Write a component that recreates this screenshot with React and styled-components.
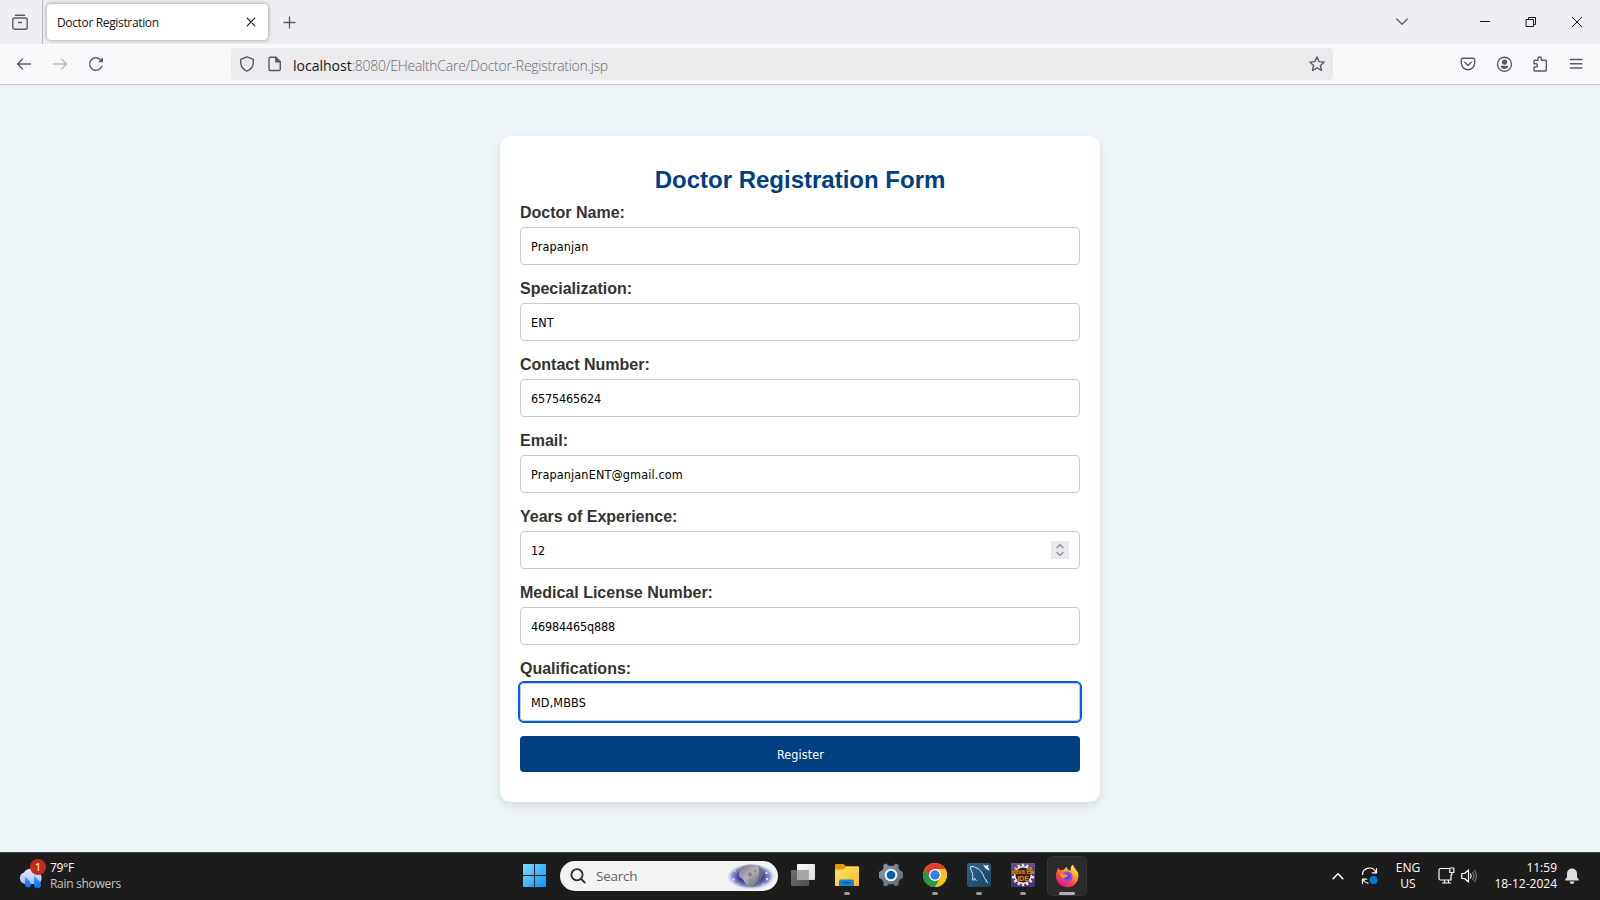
import React from 'react';
import styled, { createGlobalStyle } from 'styled-components';

const GlobalStyle = createGlobalStyle`
  *, *::before, *::after { box-sizing: border-box; }
  body { margin: 0; background: #edf5f8; }
  svg { display: block; flex: none; overflow: visible; }
`;

const ui = `'Open Sans', 'Noto Sans', sans-serif`;

const Screen = styled.div`
  width: 1600px;
  height: 900px;
  display: flex;
  flex-direction: column;
  overflow: hidden;
  font-family: ${ui};
`;

/* ---------- browser chrome ---------- */
const TabBar = styled.header`
  height: 44px;
  flex: none;
  display: flex;
  background: #eeeef3;
  color: #5b5b66;
`;
const ViewButton = styled.div`
  width: 43px;
  padding: 14px 0 0 12px;
  border-right: 1px solid #b8b8bf;
`;
const Tab = styled.div`
  width: 221px;
  height: 36px;
  margin: 4px 0 0 4px;
  padding: 0 12px 0 10px;
  display: flex;
  align-items: center;
  justify-content: space-between;
  border-radius: 4px;
  background: #fff;
  box-shadow: 0 0 4px rgba(0, 0, 0, 0.4);
  color: #15141a;
`;
const TabTitle = styled.span`
  font-size: 12px;
  line-height: 16px;
  letter-spacing: -0.35px;
  white-space: nowrap;
  padding-top: 2px;
`;
const NewTab = styled.div`
  padding: 16px 0 0 15px;
`;
const WindowControls = styled.div`
  margin-left: auto;
  padding: 16px 18px 0 0;
  display: flex;
  color: #15141a;
`;
const Control = styled.div`
  margin-left: ${(p) => p.$gap}px;
`;

const NavBar = styled.nav`
  height: 41px;
  flex: none;
  display: flex;
  align-items: center;
  padding: 0 16px;
  background: #f9f9fb;
  border-bottom: 1px solid #c8c8ce;
  color: #5b5b66;
`;
const NavGroup = styled.div`
  display: flex;
  align-items: center;
  gap: 20px;
  width: ${(p) => p.$width || 'auto'};
  margin-left: ${(p) => (p.$end ? 'auto' : 0)};
`;
const AddressBar = styled.div`
  width: 1102px;
  height: 32px;
  display: flex;
  align-items: center;
  padding: 0 8px;
  border-radius: 4px;
  background: #ebebed;
`;
const Url = styled.span`
  margin: 2px auto 0 10px;
  font-size: 14px;
  font-weight: 300;
  letter-spacing: -0.26px;
  white-space: nowrap;
  color: #6c6c72;
  b { font-weight: 400; color: #15141a; letter-spacing: 0; }
`;
const IconGap = styled.div`
  width: 12px;
`;

/* ---------- page ---------- */
const Page = styled.main`
  height: 767px;
  flex: none;
  padding-top: 51px;
  background: #edf5f8;
`;
const Card = styled.form`
  width: 600px;
  height: 666px;
  margin: 0 auto;
  padding: 30px 20px;
  border-radius: 10px;
  background: #fff;
  box-shadow: 0 4px 8px rgba(0, 0, 0, 0.1);
`;
const Title = styled.h2`
  margin: 0 0 10px;
  font: bold 24px/28px 'Liberation Sans', Arial, sans-serif;
  text-align: center;
  color: #004080;
`;
const Field = styled.div`
  margin-bottom: 15px;
`;
const Label = styled.label`
  display: block;
  margin-bottom: 5px;
  font: bold 16px/18px 'Liberation Sans', Arial, sans-serif;
  color: #333;
`;
const InputBox = styled.div`
  height: 38px;
  padding: 0 10px;
  display: flex;
  align-items: center;
  justify-content: space-between;
  border: 1px solid #ccc;
  border-radius: 4px;
  background: #fff;
  outline: ${(p) => (p.$focused ? '2px solid #0060df' : 'none')};
  outline-offset: -0.5px;
`;
const Value = styled.span`
  padding-top: 2px;
  font: 12.5px/16px 'DejaVu Sans Condensed', 'DejaVu Sans', sans-serif;
  font-stretch: condensed;
  letter-spacing: ${(p) => (p.$numeric ? '-0.16px' : '0.14px')};
  color: #000;
`;
const Spinner = styled.div`
  width: 18px;
  height: 18px;
  background: #e9e9ed;
  color: #8f8f9d;
`;
const Submit = styled.button`
  display: block;
  width: 100%;
  height: 36px;
  padding: 2px 0 0 1px;
  border: 0;
  border-radius: 4px;
  background: #004080;
  color: #fff;
  font: 12.5px/16px 'DejaVu Sans Condensed', 'DejaVu Sans', sans-serif;
  font-stretch: condensed;
  letter-spacing: 0.1px;
`;

/* ---------- taskbar ---------- */
const Taskbar = styled.footer`
  height: 48px;
  flex: none;
  display: flex;
  align-items: center;
  padding-bottom: 2px;
  border-top: 1px solid #3c3f41;
  background: #1c1c1c;
  color: #fff;
`;
const Weather = styled.div`
  width: 523px;
  padding-left: 17px;
  display: flex;
  align-items: center;
  gap: 6px;
`;
const Lines = styled.div`
  font-size: 12px;
  line-height: 16px;
  text-align: ${(p) => p.$align || 'left'};
  width: ${(p) => p.$width || 'auto'};
  white-space: nowrap;
  letter-spacing: ${(p) => p.$track || 0};
  div + div { color: ${(p) => p.$second || '#fff'}; }
`;
const SearchBox = styled.div`
  width: 218px;
  height: 30px;
  margin: 0 3px 0 14px;
  padding: 0 3px 0 10px;
  display: flex;
  align-items: center;
  border-radius: 15px;
  background: #f3f3f3;
  color: #666;
  font-size: 13.5px;
  span { margin: 0 auto 0 10px; letter-spacing: -0.25px; }
`;
const AppSlot = styled.div`
  width: 44px;
  height: 45px;
  display: flex;
  flex-direction: column;
  align-items: center;
  padding-top: 10px;
`;
const ActiveTile = styled(AppSlot)`
  width: 40px;
  height: 40px;
  margin: 0 2px;
  padding-top: 7px;
  border: 1px solid #333;
  border-radius: 5px;
  background: #2b2b2b;
`;
const Running = styled.i`
  width: ${(p) => (p.$active ? 16 : 6)}px;
  height: 3px;
  margin-top: ${(p) => (p.$active ? 4 : 5)}px;
  border-radius: 2px;
  background: ${(p) => (p.$active ? '#b5b0ab' : '#9a9a9a')};
`;
const Tray = styled.div`
  margin-left: auto;
  padding-right: 21px;
  display: flex;
  align-items: center;
`;
const TraySlot = styled.div`
  margin-left: ${(p) => p.$gap}px;
`;

const Line = ({ w = 16, h = w, box, sw = 1.4, children, ...rest }) => (
  <svg width={w} height={h} viewBox={box || `0 0 ${w} ${h}`} fill="none" stroke="currentColor"
    strokeWidth={sw} strokeLinecap="round" strokeLinejoin="round" {...rest}>{children}</svg>
);

const Firefox = () => (
  <svg width="24" height="24" viewBox="0 0 24 24">
    <defs>
      <linearGradient id="ffBody" x1=".85" y1=".05" x2=".25" y2=".95">
        <stop offset="0" stopColor="#fff44f" /><stop offset=".35" stopColor="#ffa41c" />
        <stop offset=".65" stopColor="#ff4b3e" /><stop offset="1" stopColor="#e31587" />
      </linearGradient>
      <radialGradient id="ffCore"><stop offset="0" stopColor="#592acb" /><stop offset="1" stopColor="#9059ff" /></radialGradient>
    </defs>
    <path d="M3.2 3.8c.5 1 1.200 1.900 2 2.500 1-.5 2.300-.7 3.500-.4.600-1.300 1.800-2.400 3.300-2.900-.2 1.200.3 2 1.200 2.700 1 .2 1.800.7 2.500 1.300C15.300 4.500 15.700 2 18.200.5c.1 3 3.300 4.700 4.300 8 .2-.5.200-1 .1-1.600 3 8.500-2.500 16.300-10.300 16.300C5.900 23.200.9 18.400.9 12c0-3.200 1.200-5.700 2.300-8.200z" fill="url(#ffBody)" />
    <path d="M7.200 10.300c1-1.800 3-3.200 5.200-3 3 .2 5.200 2.500 5.200 5.400 0 3-2.400 5.200-5.400 5.200-2.700 0-5-1.900-5.300-4.500 1 .7 2.300.7 3.300 0 .9-.6 1.500-.9 2.600-1-.4-1.300-2-2.100-3.400-1.700-.8.200-1.500.1-2.200-.4z" fill="url(#ffCore)" />
    <path d="M4.800 9.900c1-.6 2.300-.5 3.200.1.800.6 1.900.5 2.900.6 1 .1 2 .8 2 1.600-1.100.2-1.700.5-2.600 1.100-1.300.9-2.700.9-3.700 0-1-.8-1.700-2-1.800-3.400z" fill="#ff9b26" />
  </svg>
);

const Chrome = () => (
  <svg width="24" height="24" viewBox="0 0 24 24">
    <circle cx="12" cy="12" r="12" fill="#fbc116" />
    <path d="M1.610 6A12 12 0 0 0 12 24l5.200-9L12 12 6.800 15z" fill="#229a46" />
    <path d="M12 6h10.390A12 12 0 0 0 1.610 6l5.190 9z" fill="#e33b2e" />
    <path d="M12 6h10.390A12 12 0 0 1 12 24l5.200-9z" fill="#fbc116" />
    <circle cx="12" cy="12" r="6" fill="#fff" /><circle cx="12" cy="12" r="4.700" fill="#2f7ff3" />
  </svg>
);

const teeth = (n) => Array.from({ length: n }, (_, i) => (360 / n) * i);

const fields = [
  ['Doctor Name:', 'Prapanjan'],
  ['Specialization:', 'ENT'],
  ['Contact Number:', '6575465624'],
  ['Email:', 'PrapanjanENT@gmail.com'],
  ['Years of Experience:', '12', 'number'],
  ['Medical License Number:', '46984465q888'],
  ['Qualifications:', 'MD,MBBS', 'focused'],
];

function BrowserChrome() {
  return (
    <>
      <TabBar>
        <ViewButton>
          <Line w={16}><path d="M3.500 1.200h9" /><rect x=".8" y="4" width="14.400" height="11.200" rx="2" /><path d="M6.500 8.500h3" /></Line>
        </ViewButton>
        <Tab>
          <TabTitle>Doctor Registration</TabTitle>
          <Line w={10} sw={1.1}><path d="M1.200 1.200l7.600 7.600M8.800 1.200 1.200 8.800" /></Line>
        </Tab>
        <NewTab><Line w={13} sw={1.3}><path d="M6.500 1v11M1 6.500h11" /></Line></NewTab>
        <WindowControls>
          <Control><Line w={12} sw={1.3} stroke="#5b5b66"><path d="M.7 3 6 8.200 11.300 3" /></Line></Control>
          <Control $gap={72}><Line w={10} sw={1} strokeLinecap="butt"><path d="M0 5.500h10" /></Line></Control>
          <Control $gap={36}><Line w={10} h={12} sw={1} strokeLinejoin="miter"><path d="M.5 3.500h7v7h-7zM2.500 3.500v-2h7v7h-2" /></Line></Control>
          <Control $gap={36}><Line w={10} h={12} sw={1}><path d="M.3 1.300l9.400 9.400M9.700 1.300.3 10.700" /></Line></Control>
        </WindowControls>
      </TabBar>
      <NavBar>
        <NavGroup $width="215px">
          <Line w={16}><path d="M1.500 8h13M6.500 3 1.500 8l5 5" /></Line>
          <Line w={16} stroke="#bcbcc4"><path d="M1.500 8h13M9.500 3l5 5-5 5" /></Line>
          <Line w={16}><path d="M13.800 10.200A6.300 6.300 0 1 1 12.300 3.500" /><path d="M15 1.200v5H10z" fill="currentColor" stroke="none" /></Line>
        </NavGroup>
        <AddressBar>
          <Line w={16}><path d="M8 .8l6.300 2.600v2.800c0 4-2.500 7.300-6.300 9-3.800-1.700-6.300-5-6.300-9V3.400z" /></Line>
          <IconGap />
          <Line w={16}><path d="M3.200 1.300h5.600l4.500 4.500v7.500a1.200 1.200 0 0 1-1.200 1.200H3.200A1.200 1.200 0 0 1 2 13.300V2.500a1.200 1.200 0 0 1 1.200-1.200z" /><path d="M8.800 1.300v4.500h4.500z" fill="currentColor" /></Line>
          <Url><b>localhost</b>:8080/EHealthCare/Doctor-Registration.jsp</Url>
          <Line w={16}><path d="M8 .9l2.100 4.700 5.100.5-3.800 3.400 1.100 5L8 11.900l-4.500 2.600 1.100-5L.8 6.100l5.100-.5z" /></Line>
        </AddressBar>
        <NavGroup $end>
          <Line w={16}><path d="M2.500 2.300h11a1.200 1.200 0 0 1 1.200 1.200v3.600a6.700 6.700 0 0 1-13.400 0V3.500a1.200 1.200 0 0 1 1.200-1.200z" /><path d="M4.700 6.300 8 9.400l3.300-3.100" /></Line>
          <Line w={16}><circle cx="8.500" cy="8.300" r="7" /><circle cx="8.500" cy="6.100" r="2.600" fill="currentColor" stroke="none" /><path d="M4.700 9.800h7.600c0 2-1.600 3.300-3.800 3.300s-3.800-1.300-3.800-3.300z" fill="currentColor" stroke="none" /></Line>
          <Line w={16}><path d="M6 4.300V2.700a1.700 1.700 0 0 1 3.400 0v1.600h4.200a.7.700 0 0 1 .7.700v9.300a.7.700 0 0 1-.7.700H2.700a.7.700 0 0 1-.7-.7V11h1.900a1.600 1.600 0 0 0 0-3.200H2V5a.7.700 0 0 1 .7-.7z" /></Line>
          <Line w={16}><path d="M2.500 3.500h11.400M2.500 7.700h11.400M2.500 12h11.400" /></Line>
        </NavGroup>
      </NavBar>
    </>
  );
}

function RegistrationForm() {
  return (
    <Page>
      <Card>
        <Title>Doctor Registration Form</Title>
        {fields.map(([label, value, kind]) => (
          <Field key={label}>
            <Label>{label}</Label>
            <InputBox $focused={kind === 'focused'}>
              <Value $numeric={/^\d/.test(value)}>{value}</Value>
              {kind === 'number' && (
                <Spinner><Line w={18} sw={1.5}><path d="M6 6.500 9 3.700l3 2.800M6 11.500l3 2.800 3-2.800" /></Line></Spinner>
              )}
            </InputBox>
          </Field>
        ))}
        <Submit type="button">Register</Submit>
      </Card>
    </Page>
  );
}

function WindowsTaskbar() {
  return (
    <Taskbar>
      <Weather>
        <svg width="27" height="32" viewBox="0 0 27 32">
          <defs>
            <linearGradient id="cloud" x2="0" y2="1"><stop stopColor="#e5edff" /><stop offset="1" stopColor="#a6bdf0" /></linearGradient>
            <linearGradient id="drop" x2="0" y2="1"><stop stopColor="#48a2ff" /><stop offset="1" stopColor="#0869ef" /></linearGradient>
          </defs>
          <path d="M8 24a6 6 0 0 1-1-11.600A8 8 0 0 1 20 12a6.200 6.200 0 0 1 0 12z" fill="url(#cloud)" />
          <path d="M8 17c4 3 6 5 6 7.500a3 3 0 0 1-6 0zM17 16c4 3.500 7 6 7 8.800a3.500 3.500 0 0 1-7 0z" fill="url(#drop)" />
          <circle cx="21" cy="7" r="8" fill="#c42b1c" />
          <text x="21" y="11" textAnchor="middle" fontSize="11.500" fill="#fff">1</text>
        </svg>
        <Lines $second="#c6c6c6" $track="-0.3px"><div>79°F</div><div>Rain showers</div></Lines>
      </Weather>
      <svg width="23" height="23" viewBox="0 0 23 23">
        <defs><linearGradient id="win" gradientUnits="userSpaceOnUse" x2="23" y2="23"><stop stopColor="#7fdcff" /><stop offset="1" stopColor="#0a93f8" /></linearGradient></defs>
        <path d="M1 0h10v11H0V1a1 1 0 0 1 1-1zM12 0h10a1 1 0 0 1 1 1v10H12zM0 12h11v11H1a1 1 0 0 1-1-1zM12 12h11v10a1 1 0 0 1-1 1H12z" fill="url(#win)" />
      </svg>
      <SearchBox>
        <Line w={16} sw={1.8} stroke="#2b2b2b"><circle cx="7" cy="6.700" r="5.600" /><path d="M11.200 11 14.800 14.600" /></Line>
        <span>Search</span>
        <svg width="48" height="26" viewBox="0 0 48 26">
          <defs>
            <radialGradient id="space"><stop offset=".5" stopColor="#3d3a9c" /><stop offset=".78" stopColor="#6870be" stopOpacity=".75" /><stop offset="1" stopColor="#b5b8e8" stopOpacity="0" /></radialGradient>
            <linearGradient id="rock" x2="1" y2="1"><stop stopColor="#77727e" /><stop offset=".45" stopColor="#b4b1ba" /><stop offset="1" stopColor="#57505f" /></linearGradient>
          </defs>
          <ellipse cx="24" cy="13.500" rx="24" ry="13" fill="url(#space)" />
          <path d="M12 9 15 3.500 22 1.500l9 .5 4 4 1 6-3 7-7 5-7-2.500-3-5-4-3z" fill="url(#rock)" />
          <path d="M31 2l4 4 1 6-3 7-7 5c5-5 8-13 5-22z" fill="#4e4669" opacity=".5" />
          <circle cx="23" cy="11.500" r="2" fill="#85818b" /><circle cx="28" cy="8" r="1.500" fill="#8d8994" /><circle cx="23" cy="17" r="1.300" fill="#8d8994" />
          <g fill="#cfe6ff"><circle cx="6.500" cy="16.500" r="1.200" /><circle cx="8" cy="8" r=".8" /><circle cx="39.500" cy="10" r="1.200" /><circle cx="40" cy="16" r="1.200" /><circle cx="36" cy="21.500" r="1" /><circle cx="11" cy="21" r=".7" /></g>
        </svg>
      </SearchBox>
      <AppSlot>
        <svg width="24" height="24" viewBox="0 0 24 24">
          <defs><linearGradient id="front" x2="1" y2="1"><stop stopColor="#fff" /><stop offset="1" stopColor="#dcdcdc" /></linearGradient><linearGradient id="back" x2="1" y2="1"><stop stopColor="#707070" /><stop offset="1" stopColor="#505050" /></linearGradient></defs>
          <rect x="6" y="1" width="18" height="16" rx="1" fill="url(#front)" /><rect y="7" width="18" height="16" rx="1" fill="url(#back)" />
          <path d="M6 7h12v10H6z" fill="#a6a6a6" />
        </svg>
      </AppSlot>
      <AppSlot>
        <svg width="24" height="24" viewBox="0 0 24 24">
          <defs><linearGradient id="folder" x2="1" y2="1"><stop stopColor="#ffe17a" /><stop offset="1" stopColor="#fbbd16" /></linearGradient></defs>
          <path d="M0 2a1 1 0 0 1 1-1h7.500l2 2H23a1 1 0 0 1 1 1v5H0z" fill="#dd9a05" />
          <path d="M0 6.500h8.500L11 4h12a1 1 0 0 1 1 1v18H0z" fill="url(#folder)" />
          <path d="M4 23v-4.500a2 2 0 0 1 2-2h11a2 2 0 0 1 2 2V23z" fill="#1584d3" /><rect x="7.500" y="19" width="8.500" height="1.500" rx=".7" fill="#0a5aa5" />
        </svg>
        <Running />
      </AppSlot>
      <AppSlot>
        <svg width="24" height="24" viewBox="0 0 24 24">
          <defs><linearGradient id="gear" x2="1" y2="1"><stop stopColor="#929ba5" /><stop offset="1" stopColor="#596573" /></linearGradient></defs>
          <path d="M4.500 1.600 7.300.5 9.500 2.800h5L16.700.5l2.800 1.200.1 3.600 1.500 2.100 2.900 1.500v6.200l-2.900 1.500-1.500 2.100-.1 3.600-2.800 1.200-2.200-2.300h-5l-2.200 2.300-2.800-1.200-.1-3.600-1.500-2.100L0 15.100V8.900l2.900-1.500 1.500-2.100z" fill="url(#gear)" />
          <circle cx="12" cy="12" r="6.300" fill="#eef3f7" /><circle cx="12" cy="12" r="4.300" fill="#075fb1" />
        </svg>
      </AppSlot>
      <AppSlot><Chrome /><Running /></AppSlot>
      <AppSlot>
        <svg width="24" height="24" viewBox="0 0 24 24">
          <defs><linearGradient id="sql" x2="1" y2="1"><stop stopColor="#2c6288" /><stop offset="1" stopColor="#164766" /></linearGradient></defs>
          <rect width="24" height="24" rx="3" fill="url(#sql)" />
          <path d="M6 17.500C4.700 15.500 6.800 14 5.500 10.500 4.500 7.500 2.800 5.500 3.700 3.700 5.500 3 7 4 8.500 4.500c4 1.200 7 5 8.300 9 .6 2 1.700 3.100 3.400 4.500M18.500 18c1 .8 2 1 2.500 2.200M6 17.500c1-.5 1.200-1.500 1.500-2.500.8 1.500 1.300 2 2 3" fill="none" stroke="#dbe8ef" strokeWidth="1" />
          <path d="M16 1.500l2.500 1.200L21.500 2 21 4.500l2 3-3.500-1.300-1.700-1.700z" fill="#fff" />
        </svg>
        <Running />
      </AppSlot>
      <AppSlot>
        <svg width="24" height="24" viewBox="0 0 24 24">
          <defs><linearGradient id="ee" x2="0" y2="1"><stop stopColor="#66557c" /><stop offset="1" stopColor="#48307b" /></linearGradient></defs>
          <rect width="24" height="24" rx="1" fill="url(#ee)" />
          <g fill="#e6e6e6">{teeth(14).map((a) => <rect key={a} x="10.800" y=".8" width="2.400" height="4" transform={`rotate(${a} 12 12)`} />)}</g>
          <circle cx="12" cy="12" r="8.300" fill="#27222c" stroke="#e6e6e6" strokeWidth="1.500" />
          <g fill="#f08a1d" stroke="#3d1f08" strokeWidth=".8" paintOrder="stroke" fontFamily="Liberation Sans, sans-serif" fontWeight="bold" textAnchor="middle">
            <text x="12" y="11.300" fontSize="6.500" textLength="21" lengthAdjust="spacingAndGlyphs">Java EE</text><text x="12" y="17.500" fontSize="7">IDE</text>
          </g>
        </svg>
        <Running />
      </AppSlot>
      <ActiveTile><Firefox /><Running $active /></ActiveTile>
      <Tray>
        <Line w={12} sw={1.6}><path d="M1.200 8.700 6 3.800l4.800 4.900" /></Line>
        <TraySlot $gap={17}>
          <Line w={18} sw={1.2}><path d="M1.500 7.500A7 7 0 0 1 15 5.500M15.500 1.500v4.300h-4.300M1.500 16.500v-4.300h4.300M2 12.800a7 7 0 0 0 5 3.400" /><circle cx="12.500" cy="13" r="4" fill="#0078d4" stroke="none" /></Line>
        </TraySlot>
        <TraySlot $gap={16}><Lines $align="center" $width="26px"><div>ENG</div><div>US</div></Lines></TraySlot>
        <TraySlot $gap={17}>
          <Line w={17} h={17} sw={1.2}><path d="M10.500 1.500h-8a1.500 1.500 0 0 0-1.500 1.500v8.500A1.500 1.500 0 0 0 2.500 13h10.500V8M4.500 16h8M6.500 13v3M10.500 13v3M11.800 1h4v4.500h-4zM13.800 5.500V8" /></Line>
        </TraySlot>
        <TraySlot $gap={6}>
          <Line w={17} h={16} sw={1.2}><path d="M.8 5.500h2.700L7.500 2v12L3.500 10.500H.8zM9.500 6c.8 1.200.8 2.800 0 4" /><g stroke="#777"><path d="M11.500 4.300c1.700 2.200 1.700 5.200 0 7.400M13.500 2.700c2.500 3 2.500 7.600 0 10.600" /></g></Line>
        </TraySlot>
        <TraySlot $gap={10}><Lines $align="right" $width="69px"><div>11:59</div><div>18-12-2024</div></Lines></TraySlot>
        <TraySlot $gap={8}>
          <svg width="14" height="16" viewBox="0 0 14 16" fill="#dedede"><path d="M7 .5a5 5 0 0 1 5 5V9l1.700 2.500a.6.600 0 0 1-.5 1H.8a.6.600 0 0 1-.5-1L2 9V5.500a5 5 0 0 1 5-5zM4.500 13.500h5a2.500 2.500 0 0 1-5 0z" /></svg>
        </TraySlot>
      </Tray>
    </Taskbar>
  );
}

export default function App() {
  return (
    <Screen>
      <GlobalStyle />
      <BrowserChrome />
      <RegistrationForm />
      <WindowsTaskbar />
    </Screen>
  );
}
